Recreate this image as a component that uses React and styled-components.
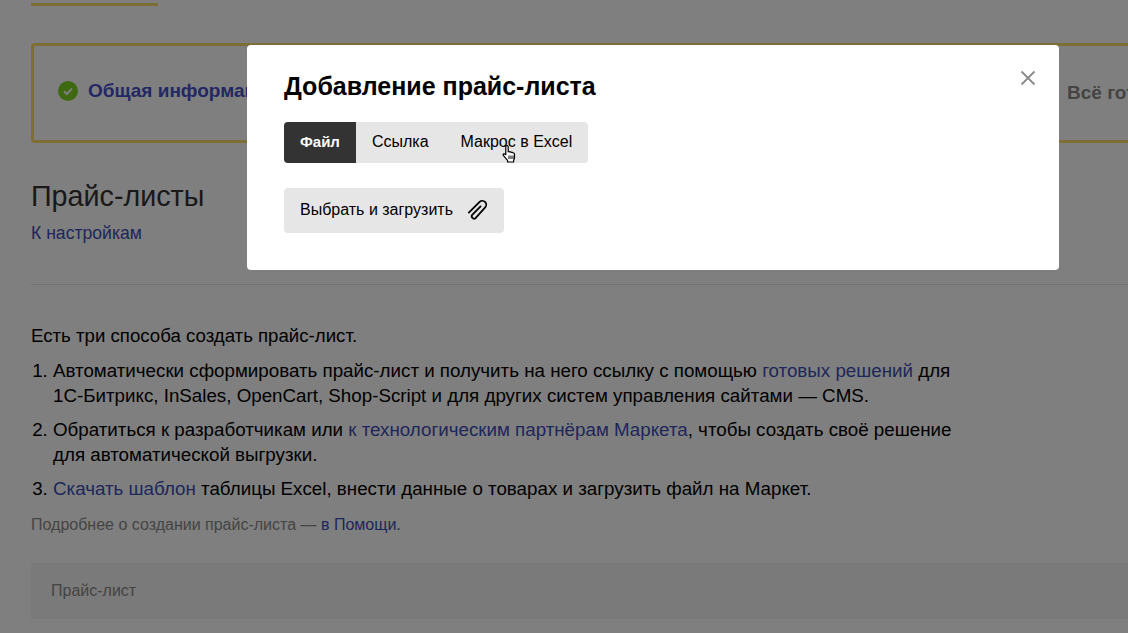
import styled, { createGlobalStyle } from "styled-components";

const GlobalStyle = createGlobalStyle`
  html, body {
    margin: 0;
    height: 100%;
    overflow: hidden;
    background: #fff;
    font-family: "Liberation Sans", Arial, sans-serif;
    color: #000;
  }
`;

const Page = styled.div`
  width: 1128px;
  height: 633px;
  box-sizing: border-box;
  padding: 3px 0 0 31px;
  overflow: hidden;
`;

const TabLine = styled.div`
  width: 127px;
  height: 3px;
  background: #f8dc6a;
`;

const Steps = styled.div`
  margin-top: 37px;
  height: 100px;
  width: 1140px;
  box-sizing: border-box;
  border: 3px solid #f8dc6a;
  border-radius: 4px;
  padding: 0 0 0 24px;
  display: flex;
  align-items: center;
  justify-content: space-between;
  font-size: 19px;
  font-weight: 700;
`;

const StepDone = styled.div`
  display: flex;
  align-items: center;
  gap: 10px;
  color: #4650c8;
  margin-top: -5px;
`;

const StepLast = styled.div`
  color: #888;
  width: 101px;
  white-space: nowrap;
`;

const Heading = styled.h1`
  margin: 37px 0 0;
  font-size: 28.7px;
  line-height: 32px;
  font-weight: 400;
  color: #333;
`;

const Link = styled.a`
  color: #3f4db5;
`;

const BackLink = styled(Link)`
  display: block;
  margin-top: 11px;
  font-size: 17.6px;
  line-height: 20px;
`;

const Divider = styled.hr`
  margin: 41px 0 0;
  border: 0;
  height: 1px;
  background: #e5e5e5;
`;

const Intro = styled.p`
  margin: 40px 0 0;
  font-size: 18.65px;
  line-height: 22px;
`;

const List = styled.ol`
  margin: 11px 0 0;
  padding: 0 0 0 22px;
  width: 900px;
  font-size: 18.75px;
  line-height: 25px;

  li {
    margin-bottom: 9px;
  }
`;

const Note = styled.p`
  margin: 14px 0 0;
  font-size: 16px;
  line-height: 20px;
  color: #8a8a8a;
`;

const TableHead = styled.div`
  margin-top: 28px;
  height: 56px;
  padding-left: 20px;
  display: flex;
  align-items: center;
  background: #f5f5f5;
  font-size: 16px;
  color: #888;
`;

const Overlay = styled.div`
  position: fixed;
  inset: 0;
  background: rgba(0, 0, 0, 0.5);
`;

const Modal = styled.div`
  position: absolute;
  left: 247px;
  top: 45px;
  width: 812px;
  height: 225px;
  box-sizing: border-box;
  padding: 26px 37px;
  background: #fff;
  border-radius: 4px;
`;

const Title = styled.h2`
  margin: 0;
  font-size: 25px;
  line-height: 30px;
  font-weight: 700;
`;

const Close = styled.button`
  position: absolute;
  top: 24px;
  right: 22px;
  width: 18px;
  height: 18px;
  padding: 0;
  border: 0;
  background: none;
  color: #8a8a8a;
  display: flex;
`;

const Segments = styled.div`
  margin-top: 21px;
  display: inline-flex;
  height: 41px;
  border-radius: 4px;
  overflow: hidden;
  background: #e6e6e6;
  font-size: 16px;
`;

const Segment = styled.div`
  display: flex;
  align-items: center;
  padding: 0 16px 2px;
  background: ${(p) => (p.$active ? "#333" : "transparent")};
  color: ${(p) => (p.$active ? "#fff" : "#000")};
  font-weight: ${(p) => (p.$active ? 700 : 400)};
  font-size: ${(p) => (p.$active ? "15px" : "16px")};
`;

const Upload = styled.div`
  margin-top: 25px;
  width: 220px;
  height: 45px;
  box-sizing: border-box;
  padding: 0 15px 2px 16px;
  display: flex;
  align-items: center;
  justify-content: space-between;
  background: #e6e6e6;
  border-radius: 4px;
  font-size: 16px;
`;

const Pointer = styled.svg`
  position: absolute;
  left: 255px;
  top: 100px;
`;

export default function App() {
  return (
    <>
      <GlobalStyle />
      <Page>
        <TabLine />
        <Steps>
          <StepDone>
            <svg width="20" height="20" viewBox="0 0 20 20">
              <circle cx="10" cy="10" r="10" fill="#7ed321" />
              <path d="M6 10.3l2.8 2.700L14 7.600" fill="none" stroke="#fff" strokeWidth="2" />
            </svg>
            Общая информация
          </StepDone>
          <StepLast>Всё готово</StepLast>
        </Steps>
        <Heading>Прайс-листы</Heading>
        <BackLink>К настройкам</BackLink>
        <Divider />
        <Intro>Есть три способа создать прайс-лист.</Intro>
        <List>
          <li>
            Автоматически сформировать прайс-лист и получить на него ссылку с помощью <Link>готовых решений</Link> для
            1С-Битрикс, InSales, OpenCart, Shop-Script и для других систем управления сайтами — CMS.
          </li>
          <li>
            Обратиться к разработчикам или <Link>к технологическим партнёрам Маркета</Link>, чтобы создать своё решение
            для автоматической выгрузки.
          </li>
          <li>
            <Link>Скачать шаблон</Link> таблицы Excel, внести данные о товарах и загрузить файл на Маркет.
          </li>
        </List>
        <Note>
          Подробнее о создании прайс-листа — <Link>в Помощи.</Link>
        </Note>
        <TableHead>Прайс-лист</TableHead>
      </Page>
      <Overlay>
        <Modal>
          <Title>Добавление прайс-листа</Title>
          <Close aria-label="Закрыть">
            <svg width="18" height="18" viewBox="0 0 18 18">
              <path d="M2.500 2.500l13 13M15.500 2.500l-13 13" stroke="currentColor" strokeWidth="1.800" />
            </svg>
          </Close>
          <Segments>
            <Segment $active>Файл</Segment>
            <Segment>Ссылка</Segment>
            <Segment>Макрос в Excel</Segment>
          </Segments>
          <Upload>
            Выбрать и загрузить
            <svg width="24" height="24" viewBox="0 0 20 20" fill="none" stroke="#000" strokeWidth="1.500" strokeLinecap="round">
              <path d="M13 7L6 14a2 2 0 0 0 2.800 2.800L16.830 7.830a3.300 3.300 0 0 0-4.660-4.660L3.200 12.150" />
            </svg>
          </Upload>
          <Pointer width="15" height="18" viewBox="0 0 15 18">
            <path
              d="M3.800 2c0-.9.500-1.500 1.200-1.500S6.200 1.100 6.200 2v4.800l.3-.1c.6-.2 1.200 0 1.400.4.600-.3 1.300-.1 1.600.4.600-.3 1.400-.1 1.700.5.500-.1 1.300.2 1.300 1.200v3.300c0 1.200-.4 2-.9 3v1.500H5.600v-1.500C4.600 14 2.800 12.300 1.500 10.700c-.6-.7-.4-1.500.2-1.800.6-.3 1.300 0 2.100.8z"
              fill="#fff"
              stroke="#000"
              strokeWidth="1.200"
              strokeLinejoin="round"
            />
            <path d="M7 10.500v3.500M9 10.500v3.500M11 10.500v3.500" stroke="#000" strokeWidth="1" />
          </Pointer>
        </Modal>
      </Overlay>
    </>
  );
}
